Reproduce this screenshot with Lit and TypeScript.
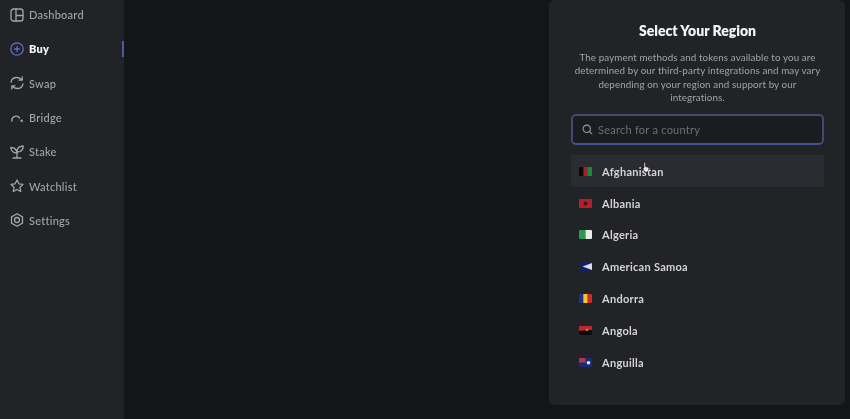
import { LitElement, html, css, svg } from "lit";
import { customElement } from "lit/decorators.js";

const s = (inner: unknown) => html`<svg class="ico" viewBox="0 0 14 14" fill="none" stroke="currentColor" stroke-width="1.300" stroke-linecap="round" stroke-linejoin="round">${inner}</svg>`;

const nav = [
  { label: "Dashboard", icon: s(svg`<rect x="1" y="1" width="12" height="12" rx="2.600"/><path d="M6 1V13M6 7.500H13"/>`) },
  { label: "Buy", active: true, icon: s(svg`<circle cx="7" cy="7" r="6.200"/><path d="M7 4.600V9.400M4.600 7H9.400"/>`) },
  { label: "Swap", icon: s(svg`<path d="M1 6.200C1.500 3.400 4 1.500 6.900 1.500c2 0 3.700.9 4.800 2.400M12.200 1v3.200H9M13 7.800C12.500 10.600 10 12.500 7.100 12.500c-2 0-3.700-.9-4.800-2.400M1.800 13V9.800H5"/>`) },
  { label: "Bridge", icon: s(svg`<path d="M1.800 10.200V9.500a4.300 4.300 0 0 1 7.800-2.500"/><circle cx="11.700" cy="9.700" r=".6"/>`) },
  { label: "Stake", icon: s(svg`<path d="M7 13V6.500M3 13h8M7 8C3.500 8 1.200 6 .8 2.500 4.300 2.500 6.600 4.500 7 8ZM7 5.800C7.400 3 9.700 1.200 13.200 1c0 3.500-2.300 5.800-5.600 6"/>`) },
  { label: "Watchlist", icon: s(svg`<path d="M7 1 8.900 4.800l4.100.6-3 2.900.7 4.200L7 10.500 3.300 12.500 4 8.300 1 5.400 5.100 4.800Z"/>`) },
  { label: "Settings", icon: s(svg`<path d="M7 .8 12.500 3.900v6.200L7 13.200 1.500 10.100V3.900Z"/><circle cx="7" cy="7" r="2.500"/>`) },
];

const flags: Record<string, unknown> = {
  Afghanistan: svg`<rect width="4.500" height="9" fill="#0a0a0a"/><rect x="4.500" width="4" height="9" fill="#9c2230"/><rect x="8.500" width="4.500" height="9" fill="#1c8a3a"/>`,
  Albania: svg`<rect width="13" height="9" fill="#b81f2c"/><circle cx="6.500" cy="4.500" r="2" fill="#4a1015"/>`,
  Algeria: svg`<rect width="6.500" height="9" fill="#2a9a52"/><rect x="6.500" width="6.500" height="9" fill="#ecece6"/>`,
  "American Samoa": svg`<rect width="13" height="9" fill="#15205e"/><path d="M13 1V8L3.500 4.500Z" fill="#dcdce6"/>`,
  Andorra: svg`<rect width="4.300" height="9" fill="#1b2f8c"/><rect x="4.300" width="4.400" height="9" fill="#f2c81e"/><rect x="8.700" width="4.300" height="9" fill="#cc2a30"/>`,
  Angola: svg`<path d="M0 0H13V4L0 5Z" fill="#c8222c"/><path d="M0 5 13 4V9H0Z" fill="#0c0c0c"/><circle cx="8" cy="3.800" r="1.400" fill="#a98a1c"/>`,
  Anguilla: svg`<rect width="13" height="9" fill="#1a2a7a"/><rect width="6.500" height="4.500" fill="#a83a52"/><circle cx="9.500" cy="4.800" r="1.800" fill="#ecebf2"/>`,
};

@customElement("app-root")
export class AppRoot extends LitElement {
  static styles = css`
    :host {
      display: block;
      width: 850px;
      height: 419px;
      overflow: hidden;
      font-family: Lato, "Noto Sans", sans-serif;
    }
    .page {
      display: flex;
      height: 419px;
      background: #131616;
      filter: blur(0.5px);
    }
    .side {
      position: relative;
      width: 124px;
      flex: none;
      background: #222327;
      display: flex;
      flex-direction: column;
      overflow: hidden;
    }
    .rows { margin-top: -2.500px; }
    .nav {
      height: 34.300px;
      display: flex;
      align-items: center;
      gap: 5px;
      padding-left: 10px;
      font-size: 11px;
      font-weight: 500;
      letter-spacing: 0.25px;
      color: #a4a5a8;
    }
    .ico { width: 14px; height: 14px; flex: none; }
    .nav.on { color: #f1f1f3; font-weight: 800; }
    .nav.on .ico { color: #5f6fc4; }
    .marker {
      position: absolute;
      right: 0;
      top: 41px;
      width: 2px;
      height: 16px;
      background: #4a58a8;
    }
    .main {
      flex: 1;
      display: flex;
      justify-content: flex-end;
      align-items: flex-start;
      padding-right: 5px;
    }
    .card {
      position: relative;
      width: 296px;
      height: 405px;
      box-sizing: border-box;
      padding: 22px 21px 0 22px;
      background: #222327;
      border-radius: 6px;
      display: flex;
      flex-direction: column;
      align-items: stretch;
    }
    h2 {
      margin: 0;
      text-align: center;
      font-size: 14px;
      line-height: 18px;
      font-weight: 800;
      color: #f4f4f5;
    }
    p {
      margin: 11px 0 0;
      text-align: center;
      font-size: 9.800px;
      line-height: 13.350px;
      letter-spacing: 0.1px;
      color: #a2a3a7;
    }
    .search {
      margin-top: 10px;
      height: 31px;
      box-sizing: border-box;
      border: 2px solid #434a6e;
      border-bottom-color: #41529a;
      border-radius: 5px;
      background: #1b1c20;
      display: flex;
      align-items: center;
      gap: 5px;
      padding-left: 9px;
      color: #6f7074;
      font-size: 11px;
      letter-spacing: 0.25px;
    }
    .search svg { width: 11px; height: 11px; color: #9a9b9f; flex: none; }
    .list { margin-top: 10px; }
    .row {
      height: 31.800px;
      display: flex;
      align-items: center;
      gap: 10px;
      padding-left: 8px;
      border-radius: 2px;
      font-size: 11px;
      font-weight: 700;
      letter-spacing: 0.28px;
      color: #d4d4d7;
    }
    .row.on { background: #2a2c32; }
    .flag { width: 13px; height: 9px; flex: none; border-radius: 1px; filter: blur(0.4px); }
    .cursor {
      position: absolute;
      left: 93px;
      top: 161px;
      width: 8px;
      height: 12px;
    }
  `;

  render() {
    return html`<div class="page">
      <aside class="side">
        <div class="rows">
          ${nav.map((n) => html`<div class="nav ${n.active ? "on" : ""}">${n.icon}<span>${n.label}</span></div>`)}
        </div>
        <div class="marker"></div>
      </aside>
      <main class="main">
        <section class="card">
          <h2>Select Your Region</h2>
          <p>The payment methods and tokens available to you are determined by our third-party integrations and may vary depending on your region and support by our integrations.</p>
          <div class="search">
            <svg viewBox="0 0 12 12" fill="none" stroke="currentColor" stroke-width="1.200" stroke-linecap="round"><circle cx="5.200" cy="5.200" r="4"/><path d="M8.300 8.300 10.800 10.800"/></svg>
            <span>Search for a country</span>
          </div>
          <div class="list">
            ${Object.keys(flags).map((c, i) => html`<div class="row ${i === 0 ? "on" : ""}">
              <svg class="flag" viewBox="0 0 13 9">${flags[c]}</svg><span>${c}</span>
            </div>`)}
          </div>
          <svg class="cursor" viewBox="0 0 8 12"><path d="M2 1.500h1.300v4l3.200 1v3L5 11H3L.8 7.500 2 7Z" fill="#e8e8e8" stroke="#222" stroke-width=".5"/></svg>
        </section>
      </main>
    </div>`;
  }
}
